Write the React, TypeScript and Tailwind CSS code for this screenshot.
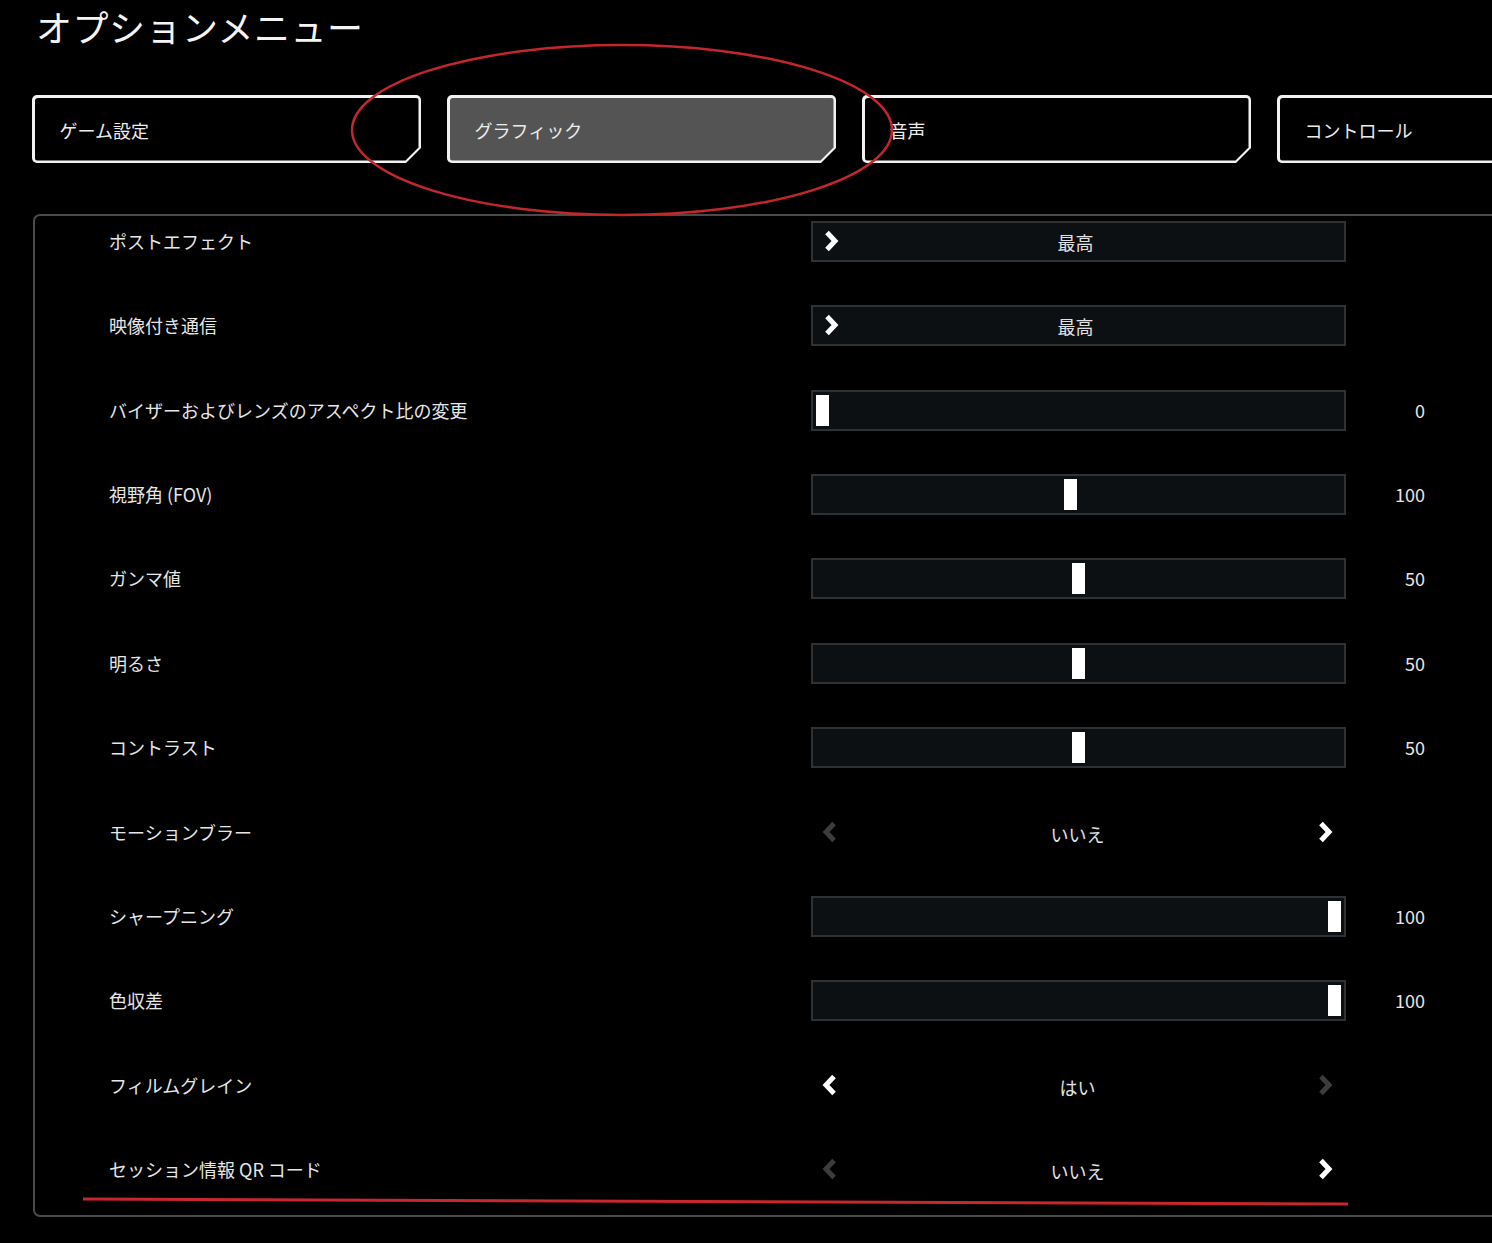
import React from 'react';

type Row =
  | { label: string; kind: 'select'; value: string }
  | { label: string; kind: 'slider'; value: number; pos: number }
  | { label: string; kind: 'toggle'; value: string; left: boolean; right: boolean };

const rows: Row[] = [
  { label: 'ポストエフェクト', kind: 'select', value: '最高' },
  { label: '映像付き通信', kind: 'select', value: '最高' },
  { label: 'バイザーおよびレンズのアスペクト比の変更', kind: 'slider', value: 0, pos: 0 },
  { label: '視野角 (FOV)', kind: 'slider', value: 100, pos: 0.485 },
  { label: 'ガンマ値', kind: 'slider', value: 50, pos: 0.5 },
  { label: '明るさ', kind: 'slider', value: 50, pos: 0.5 },
  { label: 'コントラスト', kind: 'slider', value: 50, pos: 0.5 },
  { label: 'モーションブラー', kind: 'toggle', value: 'いいえ', left: false, right: true },
  { label: 'シャープニング', kind: 'slider', value: 100, pos: 1 },
  { label: '色収差', kind: 'slider', value: 100, pos: 1 },
  { label: 'フィルムグレイン', kind: 'toggle', value: 'はい', left: true, right: false },
  { label: 'セッション情報 QR コード', kind: 'toggle', value: 'いいえ', left: false, right: true },
];

const tabs = ['ゲーム設定', 'グラフィック', '音声', 'コントロール'];

function Chevron({ dir, on }: { dir: 'left' | 'right'; on: boolean }) {
  return (
    <svg width="18" height="24" viewBox="0 0 18 24" className={on ? 'text-white' : 'text-[#3c3c3c]'}>
      <polyline
        points={dir === 'right' ? '5,3.5 13,12 5,20.5' : '13,3.5 5,12 13,20.5'}
        fill="none"
        stroke="currentColor"
        strokeWidth="5"
        strokeLinejoin="miter"
      />
    </svg>
  );
}

function Tab({ label, active }: { label: string; active: boolean }) {
  return (
    <div className="w-[389px] h-[68px] shrink-0 bg-[#f2f2f2] p-[2.5px] rounded-[5px] [clip-path:polygon(0_0,100%_0,100%_calc(100%-15px),calc(100%-15px)_100%,0_100%)]">
      <div
        className={`w-full h-full rounded-[3px] flex items-center pl-[25px] pt-[2px] text-[18px] text-[#ececec] [clip-path:polygon(0_0,100%_0,100%_calc(100%-13px),calc(100%-13px)_100%,0_100%)] ${
          active ? 'bg-[#545454]' : 'bg-black'
        }`}
      >
        {label}
      </div>
    </div>
  );
}

function Control({ row }: { row: Row }) {
  if (row.kind === 'select') {
    return (
      <div className="relative w-[535px] h-[41px] bg-[#0d1013] border-2 border-[#2f3235] flex items-center justify-center pr-[6px]">
        <div className="absolute left-[9px] top-[6px]">
          <Chevron dir="right" on />
        </div>
        <span className="text-[18px] text-[#e2e2e2] pt-[2px]">{row.value}</span>
      </div>
    );
  }
  if (row.kind === 'slider') {
    return (
      <div className="w-[535px] h-[41px] bg-[#0d1013] border-2 border-[#2f3235] px-[3px] py-[3px]">
        <div className="relative w-full h-full">
          <div
            className="absolute top-0 h-full w-[13px] bg-white"
            style={{ left: `calc(${row.pos} * (100% - 13px))` }}
          />
        </div>
      </div>
    );
  }
  return (
    <div className="w-[535px] h-[41px] flex items-center justify-between pl-[10px] pr-[12px]">
      <Chevron dir="left" on={row.left} />
      <span className="text-[18px] text-[#e2e2e2] pt-[4px]">{row.value}</span>
      <Chevron dir="right" on={row.right} />
    </div>
  );
}

export default function App() {
  return (
    <div className="relative w-[1492px] h-[1243px] overflow-hidden bg-black text-white font-['Noto_Sans_CJK_JP','Noto_Sans',sans-serif]">
      <div className="pl-[36px] pt-[8px] text-[36px] leading-[36px] text-[#f4f4f4] tracking-[0.5px]">
        オプションメニュー
      </div>

      <div className="flex gap-[26px] pl-[32px] mt-[51px]">
        {tabs.map((t, i) => (
          <Tab key={t} label={t} active={i === 1} />
        ))}
      </div>

      <div className="ml-[33px] mt-[51px] w-[1500px] h-[1003px] border-2 border-[#4b4b4b] rounded-[7px] pt-[5px] pl-[74px]">
        {rows.map((row, i) => (
          <div key={i} className="flex items-start h-[84.36px]">
            <div className="w-[702px] h-[41px] flex items-center text-[18px] text-[#e6e6e6]">{row.label}</div>
            <Control row={row} />
            <div className="w-[79px] h-[41px] flex items-center justify-end text-[18px] text-[#e6e6e6]">
              {row.kind === 'slider' ? row.value : ''}
            </div>
          </div>
        ))}
      </div>

      {/* red annotation marks */}
      <svg className="absolute left-0 top-0 pointer-events-none" width="1492" height="1243">
        <ellipse cx="622" cy="130" rx="270" ry="85" fill="none" stroke="#c3262b" strokeWidth="2.5" />
        <line x1="83" y1="1199" x2="1348" y2="1204" stroke="#c8282d" strokeWidth="3" />
      </svg>
    </div>
  );
}
